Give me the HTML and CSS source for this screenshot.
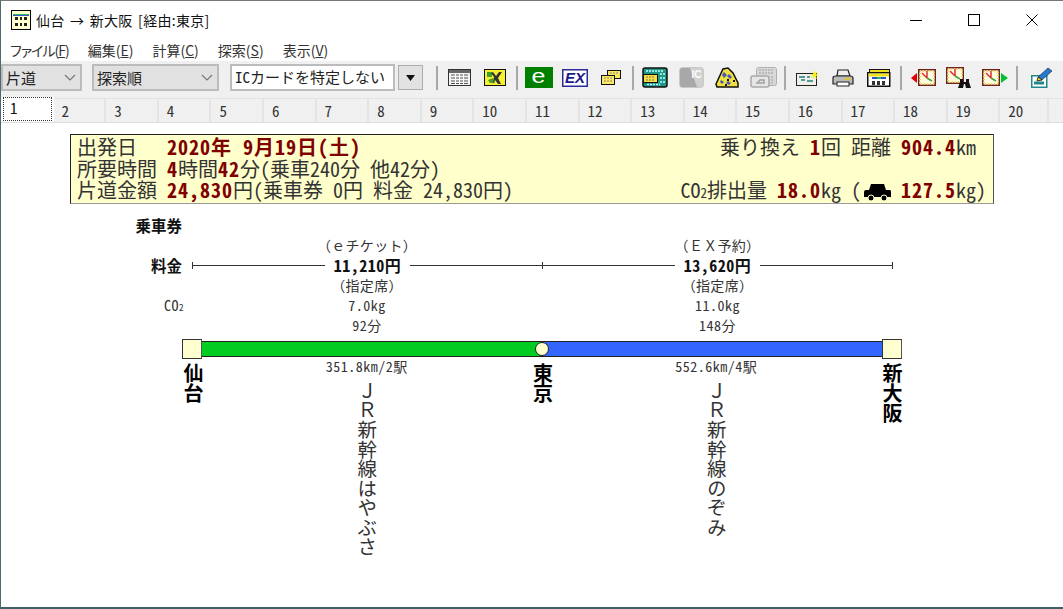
FILE: index.html
```html
<!DOCTYPE html>
<html lang="ja">
<head>
    <meta charset="UTF-8">
    <title>仙台 → 新大阪 [経由:東京]</title>
    <link rel="stylesheet" href="styles.css">
</head>
<body>
<div class="window">

    <div class="titlebar">
        <svg class="app-icon" width="20" height="20" viewBox="0 0 20 20">
            <rect x="0.500" y="0.500" width="19" height="19" fill="#ffffd0" stroke="#000"/>
            <rect x="2" y="4" width="16" height="1" fill="#20c040"/>
            <rect x="2" y="5" width="16" height="1" fill="#4050e0"/>
            <path d="M4 7h3v3H4zM9 7h2v3H9zM13 7h3v3h-3zM4 13h3v3H4zM9 13h2v3H9zM13 13h3v3h-3z" fill="#222"/>
        </svg>
        <span class="title">仙台 → 新大阪 [経由:東京]</span>
        <div class="win-buttons">
            <svg width="12" height="12" viewBox="0 0 12 12"><path d="M0 6.500h12" stroke="#000"/></svg>
            <svg width="12" height="12" viewBox="0 0 12 12"><rect x="0.500" y="0.500" width="11" height="11" fill="none" stroke="#000"/></svg>
            <svg width="12" height="12" viewBox="0 0 12 12"><path d="M0.500 0.500l11 11M11.500 0.500l-11 11" stroke="#000"/></svg>
        </div>
    </div>

    <div class="menubar">
        <span class="menu-item file-menu">ファイル(<u>F</u>)</span>
        <span class="menu-item">編集(<u>E</u>)</span>
        <span class="menu-item">計算(<u>C</u>)</span>
        <span class="menu-item">探索(<u>S</u>)</span>
        <span class="menu-item">表示(<u>V</u>)</span>
    </div>

    <div class="toolbar">
        <div class="select select-way">片道
            <svg width="12" height="7" viewBox="0 0 12 7"><path d="M1 1l5 5 5-5" fill="none" stroke="#777" stroke-width="1.200"/></svg>
        </div>
        <div class="select select-order">探索順
            <svg width="12" height="7" viewBox="0 0 12 7"><path d="M1 1l5 5 5-5" fill="none" stroke="#777" stroke-width="1.200"/></svg>
        </div>
        <div class="ic-input">ICカードを特定しない</div>
        <div class="drop-button"><svg width="9" height="6" viewBox="0 0 9 6"><path d="M0 0h9L4.500 6z" fill="#111"/></svg></div>

        <i class="sep"></i>
        <div class="tool"><svg width="23" height="17" viewBox="0 0 23 17">
            <rect x="0.500" y="0.500" width="22" height="16" fill="#f4f4f4" stroke="#333"/>
            <rect x="1" y="1" width="21" height="3" fill="#666"/>
            <path d="M3 6h17M3 9h17M3 12h17M3 14.500h17" stroke="#555"/>
            <path d="M7.500 5v11M11.500 5v11M15.500 5v11" stroke="#fff"/>
        </svg></div>
        <div class="tool"><svg width="22" height="17" viewBox="0 0 22 17">
            <rect x="0.500" y="0.500" width="21" height="16" fill="#f6f030" stroke="#111"/>
            <path d="M3 3h5v5H3zM4 11l5-2 2 5H6z" fill="#40a030"/>
            <path d="M9 3l3 4 3-4h3l-4 6 3 6h-3l-3-4-2 4 1-7-3-4z" fill="#333"/>
        </svg></div>
        <i class="sep"></i>
        <div class="tool"><span class="e-badge"><span class="e-mark">e</span></span></div>
        <div class="tool"><svg width="26" height="18" viewBox="0 0 26 18">
            <rect x="0.750" y="0.750" width="24.500" height="16.500" fill="#fff" stroke="#2a2a9a" stroke-width="1.500"/>
            <text x="13" y="14" class="icon-ex">EX</text>
        </svg></div>
        <div class="tool"><svg width="20" height="15" viewBox="0 0 20 15">
            <rect x="6.500" y="0.500" width="13" height="8" fill="#f8e860" stroke="#111"/>
            <rect x="0.500" y="5.500" width="13" height="9" fill="#f8e860" stroke="#111"/>
            <path d="M3 8h8M3 11h8M9 3h8" stroke="#888" stroke-dasharray="2 1"/>
        </svg></div>
        <i class="sep"></i>
        <div class="tool"><svg width="26" height="21" viewBox="0 0 26 21">
            <rect x="1" y="1" width="24" height="19" rx="2" fill="#209888" stroke="#111" stroke-width="1.500"/>
            <path d="M4 4h18M18 7h5M18 11h5M18 15h5M5 17.500h13" stroke="#bff" stroke-dasharray="2 1" stroke-width="1.500"/>
            <rect x="1.500" y="7.500" width="14" height="8" fill="#f8e040" stroke="#111"/>
            <path d="M4 10h9M4 13h9" stroke="#777" stroke-dasharray="2 1"/>
        </svg></div>
        <div class="tool"><svg width="25" height="21" viewBox="0 0 25 21">
            <rect x="0.500" y="0.500" width="24" height="20" rx="3" fill="#d0d0d0" stroke="#c8c8c8"/>
            <path d="M3 1h8l7 19H3q-2 0-2-2V3q0-2 2-2z" fill="#a8a8a8"/>
            <text x="17.500" y="11" class="icon-ic">IC</text>
        </svg></div>
        <div class="tool"><svg width="24" height="21" viewBox="0 0 24 21">
            <path d="M1 17L8 2l5-1 5 5 5 10v4H2z" fill="#f0e040" stroke="#111" stroke-width="1.500"/>
            <path d="M9 5l3 3-3 3-2-3zM14 7l3 3-2 2-3-3zM6 13l3 2-2 2-2-2zM13 14l3 2-2 2-3-2z" fill="#4858b8"/>
            <path d="M12 12h2v2h-2zM18 13h2v2h-2zM10 17h2v2h-2z" fill="#111"/>
        </svg></div>
        <div class="tool"><svg width="27" height="21" viewBox="0 0 27 21">
            <rect x="6.500" y="0.500" width="20" height="18" rx="2" fill="#d8d8d8" stroke="#b0b0b0"/>
            <path d="M9 3h15M9 6h15M22 9v8" stroke="#b0b0b0" stroke-width="1.500" stroke-dasharray="2 1"/>
            <rect x="1" y="9" width="18" height="11" rx="2" fill="#e6e6e6" stroke="#a8a8a8" stroke-width="1.500"/>
            <path d="M6 16h8v-3h-4l-2 2" fill="none" stroke="#a0a0a0" stroke-width="1.500"/>
        </svg></div>
        <i class="sep"></i>
        <div class="tool"><svg width="23" height="16" viewBox="0 0 23 16">
            <rect x="0.500" y="3.500" width="20" height="12" fill="#f0f0e8" stroke="#222"/>
            <path d="M3 7h6M11 7h3M5 10h4M11 11h6" stroke="#208080" stroke-width="1.500"/>
            <path d="M18 0l1 3 3-2-2 3 3 1-3 1 1 3-3-2-2 2 1-3-3-1 3-1z" fill="#f6f020"/>
        </svg></div>
        <div class="tool"><svg width="22" height="18" viewBox="0 0 22 18">
            <path d="M6 1h10l2 6H5z" fill="#eee" stroke="#222" stroke-width="1.200"/>
            <path d="M1 9q0-2 3-2h14q3 0 3 2v6H1z" fill="#bbb" stroke="#222" stroke-width="1.200"/>
            <rect x="5" y="13" width="12" height="4" fill="#fff" stroke="#222"/>
            <path d="M13 10h5" stroke="#d8c820" stroke-width="2"/>
        </svg></div>
        <div class="tool"><svg width="24" height="18" viewBox="0 0 24 18">
            <rect x="2.500" y="0.500" width="20" height="5" fill="#f0e020" stroke="#111"/>
            <rect x="0.750" y="3.750" width="22" height="13.500" fill="#fff" stroke="#111" stroke-width="1.500"/>
            <rect x="1.500" y="4.500" width="20.500" height="3" fill="#f0e020"/>
            <path d="M5 9h5" stroke="#3050d0" stroke-width="2"/><path d="M10 9h4" stroke="#20c050" stroke-width="2"/><path d="M14 9h5" stroke="#3050d0" stroke-width="2"/>
            <path d="M5 12h3v4H5zM10 12h3v4h-3zM15 12h3v4h-3z" fill="#333"/>
        </svg></div>
        <i class="sep"></i>
        <div class="tool"><svg width="25" height="17" viewBox="0 0 25 17">
            <path d="M0 9l6-5v10z" fill="#e00000"/>
            <use href="#clock" x="7"/>
        </svg></div>
        <div class="tool"><svg width="26" height="21" viewBox="0 0 26 21">
            <use href="#clock"/>
            <path d="M14 12h3v3h3v-3h3v3l2 6h-5l-1-4h-1l-1 4h-5l2-6z" fill="#111"/>
        </svg></div>
        <div class="tool"><svg width="26" height="17" viewBox="0 0 26 17">
            <use href="#clock"/>
            <path d="M19 4l7 5-7 5z" fill="#00c030"/>
        </svg></div>
        <i class="sep"></i>
        <div class="tool"><svg width="21" height="21" viewBox="0 0 21 21">
            <rect x="0.750" y="8.750" width="15" height="11.500" fill="#fff" stroke="#208888" stroke-width="1.500"/>
            <path d="M3 16h10" stroke="#208888" stroke-width="3"/>
            <path d="M7 10l10-9 4 3-10 9z" fill="#2878d0" stroke="#123" stroke-width="0.600"/>
            <path d="M7 10l4 3-5 1z" fill="#f0e020" stroke="#111" stroke-width="0.800"/>
        </svg></div>
    </div>

    <div class="tabs">
        <div class="tab active"><span class="focus">1</span></div>
        <div class="tab">2</div><div class="tab">3</div><div class="tab">4</div><div class="tab">5</div>
        <div class="tab">6</div><div class="tab">7</div><div class="tab">8</div><div class="tab">9</div>
        <div class="tab">10</div><div class="tab">11</div><div class="tab">12</div><div class="tab">13</div>
        <div class="tab">14</div><div class="tab">15</div><div class="tab">16</div><div class="tab">17</div>
        <div class="tab">18</div><div class="tab">19</div><div class="tab">20</div>
    </div>

    <div class="content">
        <div class="summary">
            <div class="summary-row">
                <div><span class="label">出発日</span><b>2020年&nbsp;9月19日(土)</b></div>
                <div class="row-end">乗り換え <b>1</b>回 距離 <b>904.4</b>km</div>
            </div>
            <div class="summary-row">
                <div><span class="label">所要時間</span><b>4</b>時間<b>42</b>分(乗車240分 他42分)</div>
            </div>
            <div class="summary-row">
                <div><span class="label">片道金額</span><b>24,830</b>円(乗車券 0円 料金 24,830円)</div>
                <div>CO<span class="sub">2</span>排出量 <b>18.0</b>kg (<svg class="car" width="27" height="18" viewBox="0 0 27 18">
                        <path d="M7 1h13l2 6h4q1 0 1 2v5H0V9q0-2 2-2h3z" fill="#000"/>
                        <circle cx="7" cy="15" r="3" fill="#000" stroke="#ffffcc"/>
                        <circle cx="20" cy="15" r="3" fill="#000" stroke="#ffffcc"/>
                    </svg> <b>127.5</b>kg)</div>
            </div>
        </div>

        <div class="fares">
            <div class="row-label strong">乗車券</div><div></div><div></div>

            <div></div><div class="cell wide">（ｅチケット）</div><div class="cell wide">（ＥＸ予約）</div>

            <div class="row-label strong">料金</div>
            <div class="fare-line"><i class="tick"></i><i class="rule"></i><b class="price">11,210円</b><i class="rule"></i></div>
            <div class="fare-line"><i class="tick"></i><i class="rule"></i><b class="price">13,620円</b><i class="rule"></i><i class="tick"></i></div>

            <div></div><div class="cell wide">（指定席）</div><div class="cell wide">（指定席）</div>

            <div class="row-label num">CO<span class="sub">2</span></div><div class="cell num">7.0kg</div><div class="cell num">11.0kg</div>

            <div></div><div class="cell num">92分</div><div class="cell num">148分</div>
        </div>

        <div class="route-bar">
            <i class="stop"></i>
            <i class="segment green"></i>
            <i class="segment blue"></i>
            <i class="stop"></i>
            <i class="via"></i>
        </div>

        <div class="stops">
            <div class="station">仙台</div>
            <div class="leg">
                <div class="leg-info">351.8km/2駅</div>
                <div class="line-name">ＪＲ新幹線はやぶさ</div>
            </div>
            <div class="station">東京</div>
            <div class="leg">
                <div class="leg-info">552.6km/4駅</div>
                <div class="line-name">ＪＲ新幹線のぞみ</div>
            </div>
            <div class="station">新大阪</div>
        </div>
    </div>
</div>

<svg width="0" height="0" class="defs">
    <symbol id="clock" width="18" height="17" viewBox="0 0 18 17">
        <rect x="0.750" y="0.750" width="16.500" height="15.500" fill="#fffbe0" stroke="#702020" stroke-width="1.500"/>
        <path d="M2 2h14v13H2z" fill="none" stroke="#e8d840" stroke-dasharray="1 2" stroke-width="2"/>
        <path d="M9 9L4 4M9 9V2" stroke="#e03030" stroke-width="1.500"/>
        <path d="M9 9l5 3" stroke="#40a040" stroke-width="1.500"/>
    </symbol>
</svg>
</body>
</html>
```

FILE: styles.css
```css
* {
    box-sizing: border-box;
}
body {
    margin: 0;
    background: #fff;
    color: #222;
    font-family: "Noto Sans CJK JP", "Liberation Sans", sans-serif;
    font-feature-settings: "hwid";
}
.window {
    height: 609px;
    display: flex;
    flex-direction: column;
    border-top: 1px solid #777;
    border-left: 1px solid #4a6a70;
    border-bottom: 2px solid #3f5f66;
    overflow: hidden;
}
.defs {
    position: absolute;
}

/* title bar */
.titlebar {
    height: 38px;
    display: flex;
    align-items: center;
    padding-left: 10px;
    flex-shrink: 0;
}
.app-icon {
    margin-right: 5px;
}
.title {
    font-size: 14px;
    word-spacing: 2px;
    letter-spacing: 0.300px;
    color: #111;
    font-feature-settings: normal;
}
.win-buttons {
    margin-left: auto;
    display: flex;
    gap: 46px;
    padding-right: 25px;
}

/* menu */
.menubar {
    height: 22px;
    display: flex;
    align-items: center;
    gap: 19px;
    padding-left: 9px;
    font-size: 14px;
    color: #333;
    flex-shrink: 0;
    font-feature-settings: "palt";
}
.file-menu {
    letter-spacing: -1px;
}

/* toolbar */
.toolbar {
    height: 37px;
    padding: 0 0 4px 0;
    background: #f0f0f0;
    display: flex;
    align-items: center;
    flex-shrink: 0;
}
.select {
    height: 27px;
    background: #e1e1e1;
    border: 2px solid #bcbcbc;
    display: flex;
    align-items: center;
    justify-content: space-between;
    padding: 0 4px 0 3px;
    font-size: 15px;
    color: #222;
}
.select-way {
    width: 81px;
    margin-right: 10px;
}
.select-order {
    width: 127px;
    margin-right: 11px;
}
.ic-input {
    width: 165px;
    height: 27px;
    background: #fff;
    border: 2px solid #bcbcbc;
    padding-left: 3px;
    font-size: 15px;
    line-height: 22px;
    white-space: nowrap;
}
.drop-button {
    width: 25px;
    height: 25px;
    margin-left: 3px;
    background: #e1e1e1;
    border: 1px solid #adadad;
    display: flex;
    align-items: center;
    justify-content: center;
}
.sep {
    width: 2px;
    height: 24px;
    background: #a8a8a8;
    margin: 0 3px;
    flex-shrink: 0;
}
.drop-button + .sep {
    margin-left: 13px;
}
.tool {
    width: 36px;
    display: flex;
    align-items: center;
    justify-content: center;
    flex-shrink: 0;
}
.tool:last-child {
    margin-left: 2px;
}
.e-badge {
    width: 28px;
    height: 21px;
    background: #008000;
    display: flex;
    justify-content: center;
}
.e-mark {
    font: 20px/18px "Liberation Sans", sans-serif;
    color: #fff;
    transform: scaleX(1.250);
}
.icon-ex {
    font: italic bold 15px "Liberation Sans", sans-serif;
    fill: #1a1a8a;
    text-anchor: middle;
}
.icon-ic {
    font: bold 10px "Liberation Sans", sans-serif;
    fill: #fff;
    text-anchor: middle;
}

/* numbered tabs */
.tabs {
    height: 25px;
    display: flex;
    background: #f0f0f0;
    border-top: 1px solid #e2e2e2;
    border-bottom: 1px solid #dcdcdc;
    flex-shrink: 0;
    font-size: 15px;
    line-height: 23px;
    color: #333;
}
.tab {
    width: 52.600px;
    padding-left: 8px;
    border-right: 2px solid #e4e4e4;
}
.tab:last-child {
    width: 49px;
}
.tab.active {
    background: #fff;
    padding: 0 2px 0 2px;
    margin-top: -2px;
    border-right: 0;
    height: 25px;
}
.focus {
    display: block;
    height: 24px;
    padding-left: 6px;
    border: 1px dotted #333;
    line-height: 20px;
    color: #111;
}

/* summary box */
.content {
    flex: 1;
    background: #fff;
    padding-top: 11px;
}
.summary {
    width: 924px;
    height: 70px;
    margin-left: 69px;
    padding: 1px 7px 1px 6px;
    background: #ffffcc;
    border: 1px solid #222;
    border-right-color: #555;
    border-bottom-color: #999;
    font-size: 20px;
    line-height: 21.500px;
    color: #333;
    white-space: nowrap;
}
.summary b {
    color: #800000;
    letter-spacing: 1px;
}
.summary-row {
    display: flex;
    justify-content: space-between;
    align-items: center;
    height: 21.500px;
}
.label {
    display: inline-block;
    width: 90px;
}
.row-end {
    margin-right: 10px;
}
.car {
    margin-left: 3px;
    vertical-align: -3px;
}
.sub {
    font-size: 0.650em;
    line-height: 1;
}

/* fare table */
.fares {
    margin: 11px 0 0 69px;
    display: grid;
    grid-template-columns: 122px 350px 351px;
    grid-auto-rows: 20px;
    font-size: 14px;
    line-height: 20px;
    color: #333;
    white-space: nowrap;
}
.row-label {
    text-align: right;
    padding-right: 8px;
}
.strong {
    font-size: 15.500px;
    font-weight: bold;
    color: #111;
    padding-right: 10px;
}
.cell {
    text-align: center;
}
.wide {
    letter-spacing: 0.300px;
    font-feature-settings: normal;
}
.num {
    font-size: 14px;
    letter-spacing: 0.500px;
}
.fare-line {
    display: flex;
    align-items: center;
}
.tick {
    width: 1px;
    height: 7px;
    background: #333;
    flex-shrink: 0;
}
.rule {
    flex: 1;
    height: 1px;
    background: #333;
}
.price {
    margin: 0 9px;
    font-size: 16px;
    letter-spacing: 0.500px;
    color: #111;
}

/* route bar */
.route-bar {
    position: relative;
    width: 720px;
    height: 20px;
    margin: 4px 0 0 181px;
    display: flex;
    align-items: center;
}
.stop {
    width: 20px;
    height: 20px;
    background: #ffffd0;
    border: 1px solid #333;
    border-right-color: #555;
    flex-shrink: 0;
}
.segment {
    flex: 1;
    height: 16px;
    border-top: 1px solid #222;
    border-bottom: 1px solid #222;
}
.green {
    background: #00cc22;
}
.blue {
    background: #3366ff;
}
.via {
    position: absolute;
    left: 353px;
    top: 3px;
    width: 14px;
    height: 14px;
    border-radius: 50%;
    background: #ffffd0;
    border: 1px solid #222;
}

/* stations and lines */
.stops {
    width: 719px;
    margin-left: 182px;
    display: flex;
    justify-content: space-between;
    align-items: flex-start;
}
.station,
.line-name {
    writing-mode: vertical-rl;
    text-orientation: upright;
    white-space: nowrap;
}
.station {
    width: 20px;
    margin-top: 4px;
    font-size: 20px;
    line-height: 20px;
    font-weight: bold;
    color: #000;
}
.leg {
    width: 20px;
    display: flex;
    flex-direction: column;
    align-items: center;
}
.leg-info {
    margin-right: 2px;
    font-size: 14px;
    line-height: 14px;
    letter-spacing: 0.500px;
    white-space: nowrap;
    color: #333;
}
.line-name {
    margin-top: 8px;
    margin-right: 2px;
    font-size: 19.500px;
    line-height: 20px;
    color: #333;
    font-feature-settings: normal;
}
```
